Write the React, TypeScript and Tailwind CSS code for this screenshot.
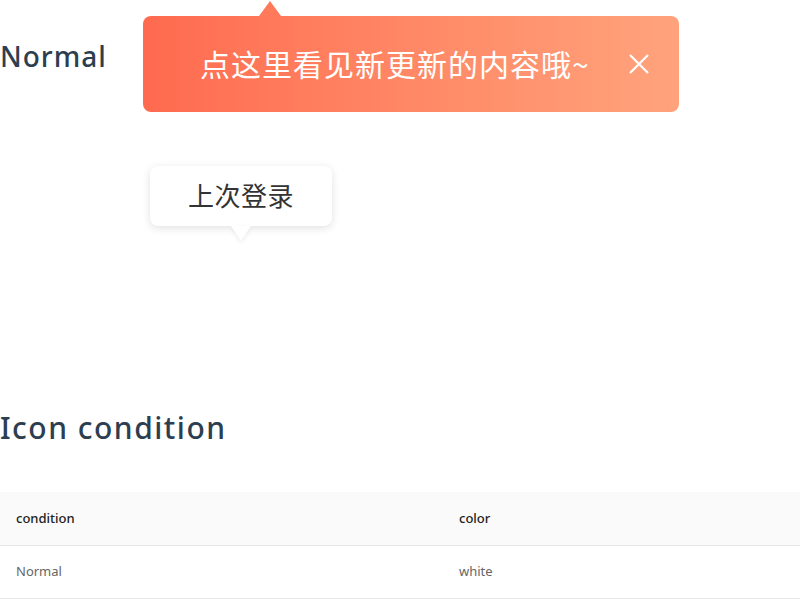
import React from "react";

export default function App() {
  return (
    <div className="relative w-[800px] h-[600px] overflow-hidden bg-white" style={{ fontFamily: '"Noto Sans", "Noto Sans CJK SC", sans-serif' }}>
      <div className="h-[16px]" />
      <div className="flex items-start">
        <h2 className="w-[143px] pt-[20px] text-[28px] leading-[40px] font-medium tracking-[1px] text-[#2c3e50]">Normal</h2>
        <div className="relative">
          <div className="absolute left-[116px] top-[-15px] w-0 h-0 border-l-[11px] border-r-[11px] border-b-[15px] border-l-transparent border-r-transparent border-b-[#ff7a5b]" />
          <div className="w-[536px] h-[96px] rounded-[8px] bg-gradient-to-r from-[#ff6a4f] to-[#ffa37c] flex items-center pl-[57px] pr-[28px] text-white">
            <span className="flex-1 text-[30px] leading-[40px] tracking-[1px] mt-[-3px]" style={{ fontFamily: '"Noto Sans CJK SC", sans-serif' }}>点这里看见新更新的内容哦~</span>
            <svg width="24" height="24" viewBox="0 0 24 24" className="ml-[2px]">
              <path d="M3 3 L21 21 M21 3 L3 21" stroke="white" strokeWidth="2.2" fill="none" />
            </svg>
          </div>
        </div>
      </div>
      <div className="pl-[150px] pt-[54px]">
        <div className="relative w-[182px]">
          <div className="h-[60px] rounded-[8px] bg-white shadow-[0_2px_8px_rgba(0,0,0,0.12)] flex items-center justify-center text-[26px] tracking-[0.5px] text-[#333333]" style={{ fontFamily: '"Noto Sans CJK SC", sans-serif' }}>
            <span className="mt-[-3px]">上次登录</span>
          </div>
          <div className="absolute left-[81px] top-[60px] w-0 h-0 border-l-[10px] border-r-[10px] border-t-[15px] border-l-transparent border-r-transparent border-t-white drop-shadow-[0_2px_2px_rgba(0,0,0,0.08)]" />
        </div>
      </div>
      <h2 className="mt-[180px] text-[30px] leading-[44px] font-medium tracking-[1.5px] text-[#2c3e50]">Icon condition</h2>
      <table className="mt-[42px] w-full border-collapse text-[13px]" style={{ fontFamily: '"Noto Sans", sans-serif' }}>
        <thead>
          <tr className="bg-[#fafafa] border-b border-[#e8e8e8]">
            <th className="h-[53px] pl-[16px] text-left font-medium text-[#222] w-[459px]">condition</th>
            <th className="h-[53px] text-left font-medium text-[#222]">color</th>
          </tr>
        </thead>
        <tbody>
          <tr className="border-b border-[#e8e8e8]">
            <td className="h-[53px] pl-[16px] text-[#666]">Normal</td>
            <td className="h-[53px] text-[#666]">white</td>
          </tr>
        </tbody>
      </table>
    </div>
  );
}
